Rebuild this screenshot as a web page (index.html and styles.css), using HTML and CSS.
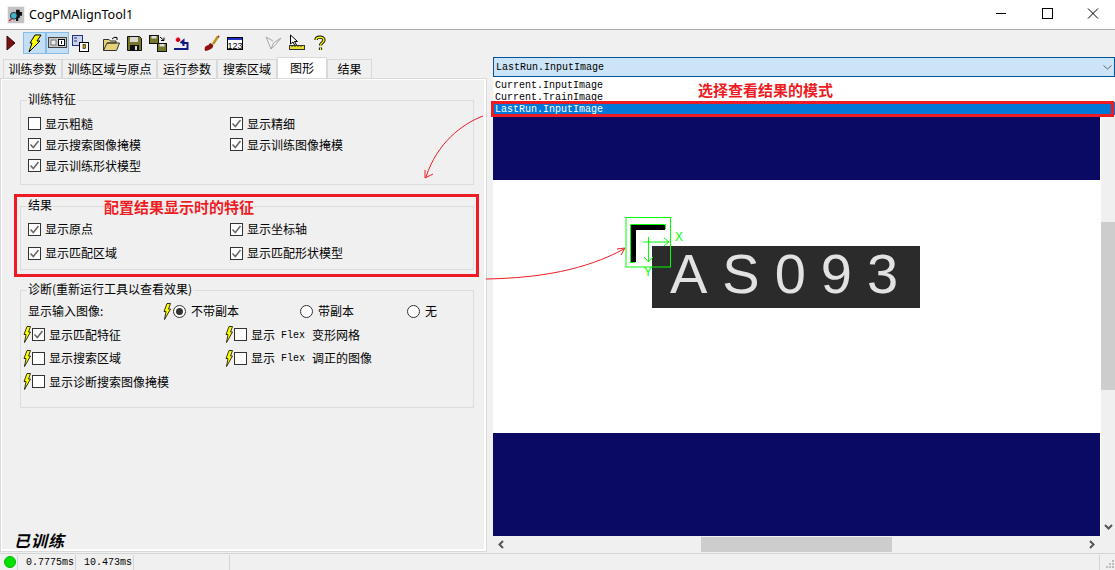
FILE: index.html
```html
<!DOCTYPE html>
<html lang="zh">
<head>
<meta charset="utf-8">
<title>CogPMAlignTool1</title>
<link rel="stylesheet" href="styles.css">
</head>
<body>
<svg class="defs" width="0" height="0">
  <symbol id="bolt" viewBox="0 0 8 17"><path d="M4 0.5H7.5L5.5 6H7.5L1.5 16.5L3 8.5H1Z" fill="#ff0" stroke="#000" stroke-width="0.8"/></symbol>
  <symbol id="tick" viewBox="0 0 13 13"><path d="M2.5 6.5L5.3 9.5L10.5 3" fill="none" stroke="#666" stroke-width="1.5"/></symbol>
</svg>
<div class="app">
  <header class="titlebar">
    <svg class="appicon" width="24" height="24" viewBox="0 0 24 24"><rect x="1" y="1" width="22" height="22" fill="#c4c4c4"/><path d="M12 5h5v3h3v5h-3v3h-2v4h-3v-4H9v-5h3z" fill="#111"/><circle cx="9" cy="13" r="4.5" fill="#3fb6c8" stroke="#223" stroke-width="1.2"/><path d="M6 17l-3 3" stroke="#d02020" stroke-width="2"/></svg>
    <span class="title">CogPMAlignTool1</span>
    <div class="winbtns">
      <svg width="46" height="29" viewBox="0 0 46 29"><path d="M18 13.5H28" stroke="#000"/></svg>
      <svg width="46" height="29" viewBox="0 0 46 29"><rect x="18.5" y="8.5" width="10" height="10" fill="none" stroke="#000"/></svg>
      <svg width="46" height="29" viewBox="0 0 46 29"><path d="M18 8.5L28 18.5M28 8.5L18 18.5" stroke="#000"/></svg>
    </div>
  </header>
  <nav class="toolbar">
    <span class="tb tb-first"><svg width="12" height="16" viewBox="0 0 12 16"><path d="M2 1L10 8L2 15Z" fill="#7a1010" stroke="#3a0808"/></svg></span>
    <span class="tb on"><svg width="16" height="19" viewBox="0 0 16 19"><path d="M8 1H14L10 7H13L2 18L5 9H3Z" fill="#ff0" stroke="#000"/></svg></span>
    <span class="tb on"><svg width="19" height="12" viewBox="0 0 19 12"><rect x=".5" y=".5" width="18" height="10" fill="#c8c8c8" stroke="#444"/><rect x="3" y="3" width="5" height="5" fill="#eee" stroke="#777"/><rect x="10.500" y="2.500" width="6" height="6" fill="#fff" stroke="#000"/><path d="M13.500 4v3" stroke="#000"/></svg></span>
    <span class="tb"><svg width="17" height="17" viewBox="0 0 17 17"><rect x=".5" y=".5" width="10" height="10" fill="#c8d4ee" stroke="#24307a"/><path d="M2 3h3M2 6h3" stroke="#24307a"/><rect x="7.500" y="7.500" width="9" height="9" fill="#fff" stroke="#000"/><rect x="11" y="9.500" width="2.500" height="4" fill="#c9a800" stroke="#000" stroke-width=".6"/></svg></span>
    <span class="tb gap1"><svg width="17" height="15" viewBox="0 0 17 15"><path d="M.5 14.500V3.500H6L7.500 5H13V7H4L.5 14.500H13.500L16.500 7H4" fill="#e7d37a" stroke="#333"/><path d="M9 3Q11 .5 14 1.500M14 1.500V4M14 1.500H11.500" fill="none" stroke="#000"/></svg></span>
    <span class="tb"><svg width="15" height="15" viewBox="0 0 15 15"><path d="M.5 .5H12.500L14.500 2.500V14.500H.5Z" fill="#77772a" stroke="#111"/><rect x="3" y="1" width="8" height="5" fill="#d8d8d0"/><rect x="3" y="9" width="9" height="5.500" fill="#111"/><rect x="8" y="10" width="2" height="4" fill="#ddd"/></svg></span>
    <span class="tb"><svg width="18" height="17" viewBox="0 0 18 17"><rect x=".5" y=".5" width="9" height="8" fill="#77772a" stroke="#111"/><rect x="2.500" y="1" width="5" height="2.500" fill="#ddd"/><rect x="8.500" y="8.500" width="9" height="8" fill="#77772a" stroke="#111"/><rect x="10.500" y="9" width="5" height="2.500" fill="#ddd"/><path d="M11 2L15 5.500M15 2.500V5.500H12" fill="none" stroke="#000"/></svg></span>
    <span class="tb"><svg width="16" height="15" viewBox="0 0 16 15"><path d="M5 1.500V6M2.800 3.800H7.200" stroke="#e00010" stroke-width="2.500"/><path d="M7.500 7L10.500 4.500V10M9 7H14.500V13H1" fill="none" stroke="#101a80" stroke-width="2"/></svg></span>
    <span class="tb gap2"><svg width="16" height="17" viewBox="0 0 16 17"><path d="M9 9L14 1.500" stroke="#b8941a" stroke-width="2.500"/><path d="M14 1L15 2" stroke="#c02020" stroke-width="2"/><path d="M6 8Q10 9 9 12Q7 15 1 16Q0 12 2 11Q5 10.500 6 8Z" fill="#8e1414"/></svg></span>
    <span class="tb"><svg width="16" height="13" viewBox="0 0 16 13"><rect x=".5" y=".5" width="15" height="12" fill="#fff" stroke="#000"/><rect x="1" y="1" width="14" height="2" fill="#2030c0"/><text class="t123" x="8" y="11.500" text-anchor="middle">123</text></svg></span>
    <span class="tb gap3"><svg width="17" height="15" viewBox="0 0 17 15"><path d="M1 1L6 13L8.500 7L16 2L10 9.500L6 13" fill="none" stroke="#a8a8a8"/><path d="M1 1L8 5" stroke="#a8a8a8"/></svg></span>
    <span class="tb"><svg width="16" height="18" viewBox="0 0 16 18"><path d="M1.500 1V10L4 8L6 12L7.500 11L5.500 7.500H8.500Z" fill="#fff" stroke="#000"/><rect x=".5" y="11.500" width="15" height="4" fill="#e8e030" stroke="#333"/><path d="M3 11.500V13M6 11.500V13M9 11.500V13M12 11.500V13" stroke="#333"/></svg></span>
    <span class="tb"><svg width="12" height="16" viewBox="0 0 12 16"><path d="M2 5C2 1.500 10 1 10 5C10 8 6.500 7.500 6.500 10.500M6.500 12.500V15" fill="none" stroke="#000" stroke-width="3.200"/><path d="M2 5C2 1.500 10 1 10 5C10 8 6.500 7.500 6.500 10.500M6.500 12.500V15" fill="none" stroke="#ff0" stroke-width="1.400"/></svg></span>
  </nav>
  <main class="body">
    <section class="left">
      <div class="tabs">
        <span class="tab t1">训练参数</span>
        <span class="tab t2">训练区域与原点</span>
        <span class="tab t3">运行参数</span>
        <span class="tab t4">搜索区域</span>
        <span class="tab t5 active">图形</span>
        <span class="tab t6">结果</span>
      </div>
      <div class="page">
        <fieldset class="group g1">
          <legend>训练特征</legend>
          <div class="grid">
            <label class="chk"><i class="box"></i>显示粗糙</label>
            <label class="chk"><i class="box"><svg><use href="#tick"/></svg></i>显示精细</label>
            <label class="chk"><i class="box"><svg><use href="#tick"/></svg></i>显示搜索图像掩模</label>
            <label class="chk"><i class="box"><svg><use href="#tick"/></svg></i>显示训练图像掩模</label>
            <label class="chk"><i class="box"><svg><use href="#tick"/></svg></i>显示训练形状模型</label>
          </div>
        </fieldset>
        <fieldset class="group g2">
          <legend>结果</legend>
          <div class="grid wide">
            <label class="chk"><i class="box"><svg><use href="#tick"/></svg></i>显示原点</label>
            <label class="chk"><i class="box"><svg><use href="#tick"/></svg></i>显示坐标轴</label>
            <label class="chk"><i class="box"><svg><use href="#tick"/></svg></i>显示匹配区域</label>
            <label class="chk"><i class="box"><svg><use href="#tick"/></svg></i>显示匹配形状模型</label>
          </div>
        </fieldset>
        <fieldset class="group g3">
          <legend>诊断(重新运行工具以查看效果)</legend>
          <div class="radios">
            <span class="rlabel">显示输入图像:</span>
            <svg class="bolt"><use href="#bolt"/></svg>
            <span class="radio r1"><i class="dot on"></i>不带副本</span>
            <span class="radio r2"><i class="dot"></i>带副本</span>
            <span class="radio r3"><i class="dot"></i>无</span>
          </div>
          <div class="grid wide bolts">
            <label class="chk"><svg class="bolt"><use href="#bolt"/></svg><i class="box"><svg><use href="#tick"/></svg></i>显示匹配特征</label>
            <label class="chk"><svg class="bolt"><use href="#bolt"/></svg><i class="box"></i>显示<b class="mono">Flex</b>变形网格</label>
            <label class="chk"><svg class="bolt"><use href="#bolt"/></svg><i class="box"></i>显示搜索区域</label>
            <label class="chk"><svg class="bolt"><use href="#bolt"/></svg><i class="box"></i>显示<b class="mono">Flex</b>调正的图像</label>
            <label class="chk"><svg class="bolt"><use href="#bolt"/></svg><i class="box"></i>显示诊断搜索图像掩模</label>
          </div>
        </fieldset>
        <div class="trained">已训练</div>
      </div>
    </section>
    <section class="right">
      <div class="combo"><span>LastRun.InputImage</span><svg width="9" height="5" viewBox="0 0 9 5"><path d="M.5 .5L4.500 4L8.500 .5" fill="none" stroke="#666"/></svg></div>
      <ul class="list">
        <li>Current.InputImage</li>
        <li>Current.TrainImage</li>
        <li class="sel">LastRun.InputImage</li>
      </ul>
      <div class="viewer">
        <div class="canvas">
          <div class="band"></div>
          <div class="white"><div class="plate">AS093</div></div>
          <div class="band grow"></div>
        </div>
        <div class="vbar"><div class="vspace"></div><div class="vthumb"></div><div class="vspace2"></div><svg class="chev" width="9" height="6" viewBox="0 0 9 6"><path d="M1 1L4.500 4.500L8 1" fill="none" stroke="#555" stroke-width="2"/></svg></div>
      </div>
      <div class="hbar">
        <svg width="6" height="9" viewBox="0 0 6 9"><path d="M5 1L1.500 4.500L5 8" fill="none" stroke="#555" stroke-width="2"/></svg>
        <div class="hthumb"></div>
        <svg width="6" height="9" viewBox="0 0 6 9"><path d="M1 1L4.500 4.500L1 8" fill="none" stroke="#555" stroke-width="2"/></svg>
      </div>
    </section>
  </main>
  <footer class="status">
    <span class="cell c0"><i class="led"></i></span>
    <span class="cell c1">0.7775ms</span>
    <span class="cell c2">10.473ms</span>
    <span class="cell c3"></span>
    <span class="cell c4"></span>
    <span class="cell c5"><svg width="9" height="9" viewBox="0 0 9 9"><path d="M7 1h2v2H7zM4 4h2v2H4zM7 4h2v2H7zM1 7h2v2H1zM4 7h2v2H4zM7 7h2v2H7z" fill="#bbb"/></svg></span>
  </footer>
  <div class="note n1">配置结果显示时的特征</div>
  <div class="note n2">选择查看结果的模式</div>
  <div class="redbox b1"></div>
  <div class="redbox b2"></div>
  <svg class="overlay" width="1115" height="570" viewBox="0 0 1115 570">
    <g fill="none" stroke="#ed1c24">
      <path d="M483 116C462 124 437 143 426 177M425 170L425 178L433 174"/>
      <path d="M486 279C540 278 585 270 624 249M617 249L625 248L621 255"/>
    </g>
    <g fill="none" stroke="#00ff00">
      <rect x="626" y="217.500" width="44.500" height="49.500"/>
      <path d="M631 224.500H665.500V229M630.500 224.500V262.500H635"/>
      <path d="M643 242H669M664 238L669 242L664 246"/>
      <path d="M648.500 237V262M644 257L648.500 262L653 257"/>
    </g>
    <path d="M633.500 262V227.500H665" fill="none" stroke="#000" stroke-width="5"/>
    <text class="axis" x="675" y="241">X</text>
    <text class="axis" x="644" y="276">Y</text>
  </svg>
</div>
</body>
</html>
```
FILE: styles.css
```css
html, body { margin: 0; padding: 0; }
body { width: 1115px; height: 570px; overflow: hidden; background: #f0f0f0; font: 12px/14px "Noto Sans CJK SC", "Liberation Sans", sans-serif; color: #000; }
.defs { position: absolute; }
.app { position: relative; width: 1115px; height: 570px; display: flex; flex-direction: column; overflow: hidden; }
.titlebar { height: 29px; flex: none; background: #fff; border-bottom: 1px solid #aaa; display: flex; align-items: center; padding-left: 7px; }
.appicon { width: 18px; height: 18px; }
.title { margin-left: 4px; font: 12.600px "Noto Sans", "Liberation Sans", sans-serif; }
.winbtns { margin-left: auto; display: flex; margin-right: -1px; }
.toolbar { height: 26px; flex: none; display: flex; align-items: center; }
.tb { width: 23px; height: 22px; display: flex; align-items: center; justify-content: center; box-sizing: border-box; }
.tb.on { background: #c4def4; border: 1px solid #86bde8; }
.tb-first { width: 22px; margin-right: 1px; }
.gap1 { margin-left: 8px; }
.gap2 { margin-left: 8px; }
.gap3 { margin-left: 16px; }
.t123 { font: 9px "Liberation Sans", sans-serif; fill: #000; }
.body { flex: 1; display: flex; min-height: 0; }
.left { width: 490px; flex: none; display: flex; flex-direction: column; padding-top: 2px; box-sizing: border-box; }
.tabs { display: flex; height: 20px; padding-left: 3px; align-items: flex-end; flex: none; }
.tab { height: 19px; box-sizing: border-box; border: 1px solid #d9d9d9; border-bottom: none; display: flex; align-items: center; justify-content: center; background: #f0f0f0; white-space: nowrap; }
.t1 { width: 59px; }
.t2 { width: 95px; }
.t3 { width: 60px; }
.t4 { width: 60px; }
.t5 { width: 50px; }
.t6 { width: 45px; }
.tab.active { height: 21px; background: #fff; }
.page { height: 474px; width: 487px; box-sizing: border-box; border: 1px solid #d9d9d9; box-shadow: inset 1px 1px 0 #fff, inset -2px -2px 0 #fff; padding: 13px 0 0 19px; display: flex; flex-direction: column; }
.group { margin: 0; padding: 0 0 0 7px; width: 454px; box-sizing: border-box; border: 1px solid #dcdcdc; min-width: 0; flex: none; }
.group legend { padding: 0 1px 2px; margin-left: -1px; font-size: 12px; line-height: 14px; }
.g1 { height: 93px; }
.g2 { height: 72px; margin-top: 13px; }
.g3 { height: 126px; margin-top: 12px; }
.grid { display: grid; grid-template-columns: 202px 1fr; grid-auto-rows: 21px; padding-top: 5px; }
.grid.wide { grid-auto-rows: 24px; padding-top: 3px; }
.chk { display: flex; align-items: center; white-space: nowrap; }
.box { width: 13px; height: 13px; box-sizing: border-box; border: 1px solid #333; background: #fff; margin-right: 4px; flex: none; position: relative; }
.box svg { position: absolute; left: -1px; top: -1px; width: 13px; height: 13px; }
.mono { font: 10px/14px "Liberation Mono", monospace; margin: 2px 7px 0 6px; font-weight: 400; }
.bolt { width: 8px; height: 17px; flex: none; }
.radios { display: flex; align-items: center; height: 16px; margin-top: 5px; }
.rlabel { width: 135px; flex: none; }
.radio { display: flex; align-items: center; }
.radios .bolt { margin-right: 2px; }
.r1 { width: 127px; }
.r2 { width: 107px; }
.dot { width: 13px; height: 13px; box-sizing: border-box; border: 1px solid #333; border-radius: 50%; background: #fff; margin-right: 5px; flex: none; position: relative; }
.dot.on::after { content: ""; position: absolute; left: 2px; top: 2px; width: 7px; height: 7px; border-radius: 50%; background: #333; }
.grid.wide.bolts { margin-left: -5px; padding-top: 4px; grid-auto-rows: 23.500px; }
.bolts .bolt { margin-right: 1px; }
.trained { margin-top: auto; margin-bottom: 1px; margin-left: -6px; font: italic 700 16px/20px "Noto Sans CJK SC", sans-serif; letter-spacing: 1px; }
.right { flex: 1; min-width: 0; display: flex; flex-direction: column; padding: 1px 0 0 3px; }
.combo { height: 20px; flex: none; box-sizing: border-box; background: #cce4f7; border: 1px solid #005499; display: flex; align-items: center; justify-content: space-between; padding: 0 2px 0 2px; font: 10px "Liberation Mono", monospace; }
.list { margin: 0; list-style: none; height: 38px; flex: none; background: #fff; font: 10px/12px "Liberation Mono", monospace; padding: 3px 0 0 2px; box-sizing: border-box; }
.list li { height: 12px; }
.list .sel { background: #0078d7; color: #fff; margin: -2px 0 0 -2px; padding-left: 2px; height: 13px; line-height: 15px; }
.viewer { height: 421px; flex: none; display: flex; }
.canvas { width: 607px; flex: none; display: flex; flex-direction: column; }
.band { height: 65px; background: #0a0a64; flex: none; }
.band.grow { height: 103px; }
.white { height: 253px; background: #fff; flex: none; padding: 66px 0 0 159px; box-sizing: border-box; }
.plate { width: 268px; height: 62px; box-sizing: border-box; background: #2b2b2b; color: #e2e2e2; font: 56px/56px "Liberation Sans", sans-serif; letter-spacing: 15px; padding-left: 18px; white-space: nowrap; }
.vbar { flex: 1; background: #f0f0f0; border-left: 1px solid #fff; display: flex; flex-direction: column; align-items: center; }
.vspace { height: 107px; flex: none; }
.vthumb { width: 100%; height: 168px; background: #cdcdcd; flex: none; }
.vspace2 { flex: 1; }
.chev { margin-bottom: 6px; }
.hbar { height: 17px; flex: none; display: flex; align-items: center; padding: 0 20px 0 5px; }
.hthumb { width: 191px; height: 15px; background: #cdcdcd; margin: 0 auto 0 197px; }
.status { height: 17px; flex: none; box-sizing: border-box; border-top: 1px solid #d4d4d4; display: flex; align-items: stretch; font: 10px/17px "Liberation Mono", monospace; }
.cell { border-right: 1px solid #d4d4d4; box-sizing: border-box; padding: 1px 0 0 8px; margin: 1px 0 0; line-height: 14px; }
.c0 { width: 18px; padding: 0; position: relative; }
.c1 { width: 58px; }
.c2 { width: 58px; }
.c3 { width: 96px; }
.c4 { width: 870px; }
.c5 { border: none; padding: 4px 0 0 5px; flex: 1; }
.led { position: absolute; left: 4px; top: 1px; width: 12px; height: 12px; border-radius: 50%; background: #00e000; border: 1px solid #0b0; box-sizing: border-box; }
.note { position: absolute; color: #ed1c24; font: 700 15px/18px "Noto Sans CJK SC", sans-serif; white-space: nowrap; text-shadow: 0 0 1px #fff; }
.n1 { left: 104px; top: 198px; }
.n2 { left: 698px; top: 81px; }
.redbox { position: absolute; box-sizing: border-box; border: 3px solid #ed1c24; }
.b1 { left: 14px; top: 194px; width: 465px; height: 83px; }
.b2 { left: 491px; top: 101px; width: 623px; height: 16px; }
.overlay { position: absolute; left: 0; top: 0; pointer-events: none; }
.axis { fill: #00ff00; font: 12px "Liberation Sans", sans-serif; }
```
